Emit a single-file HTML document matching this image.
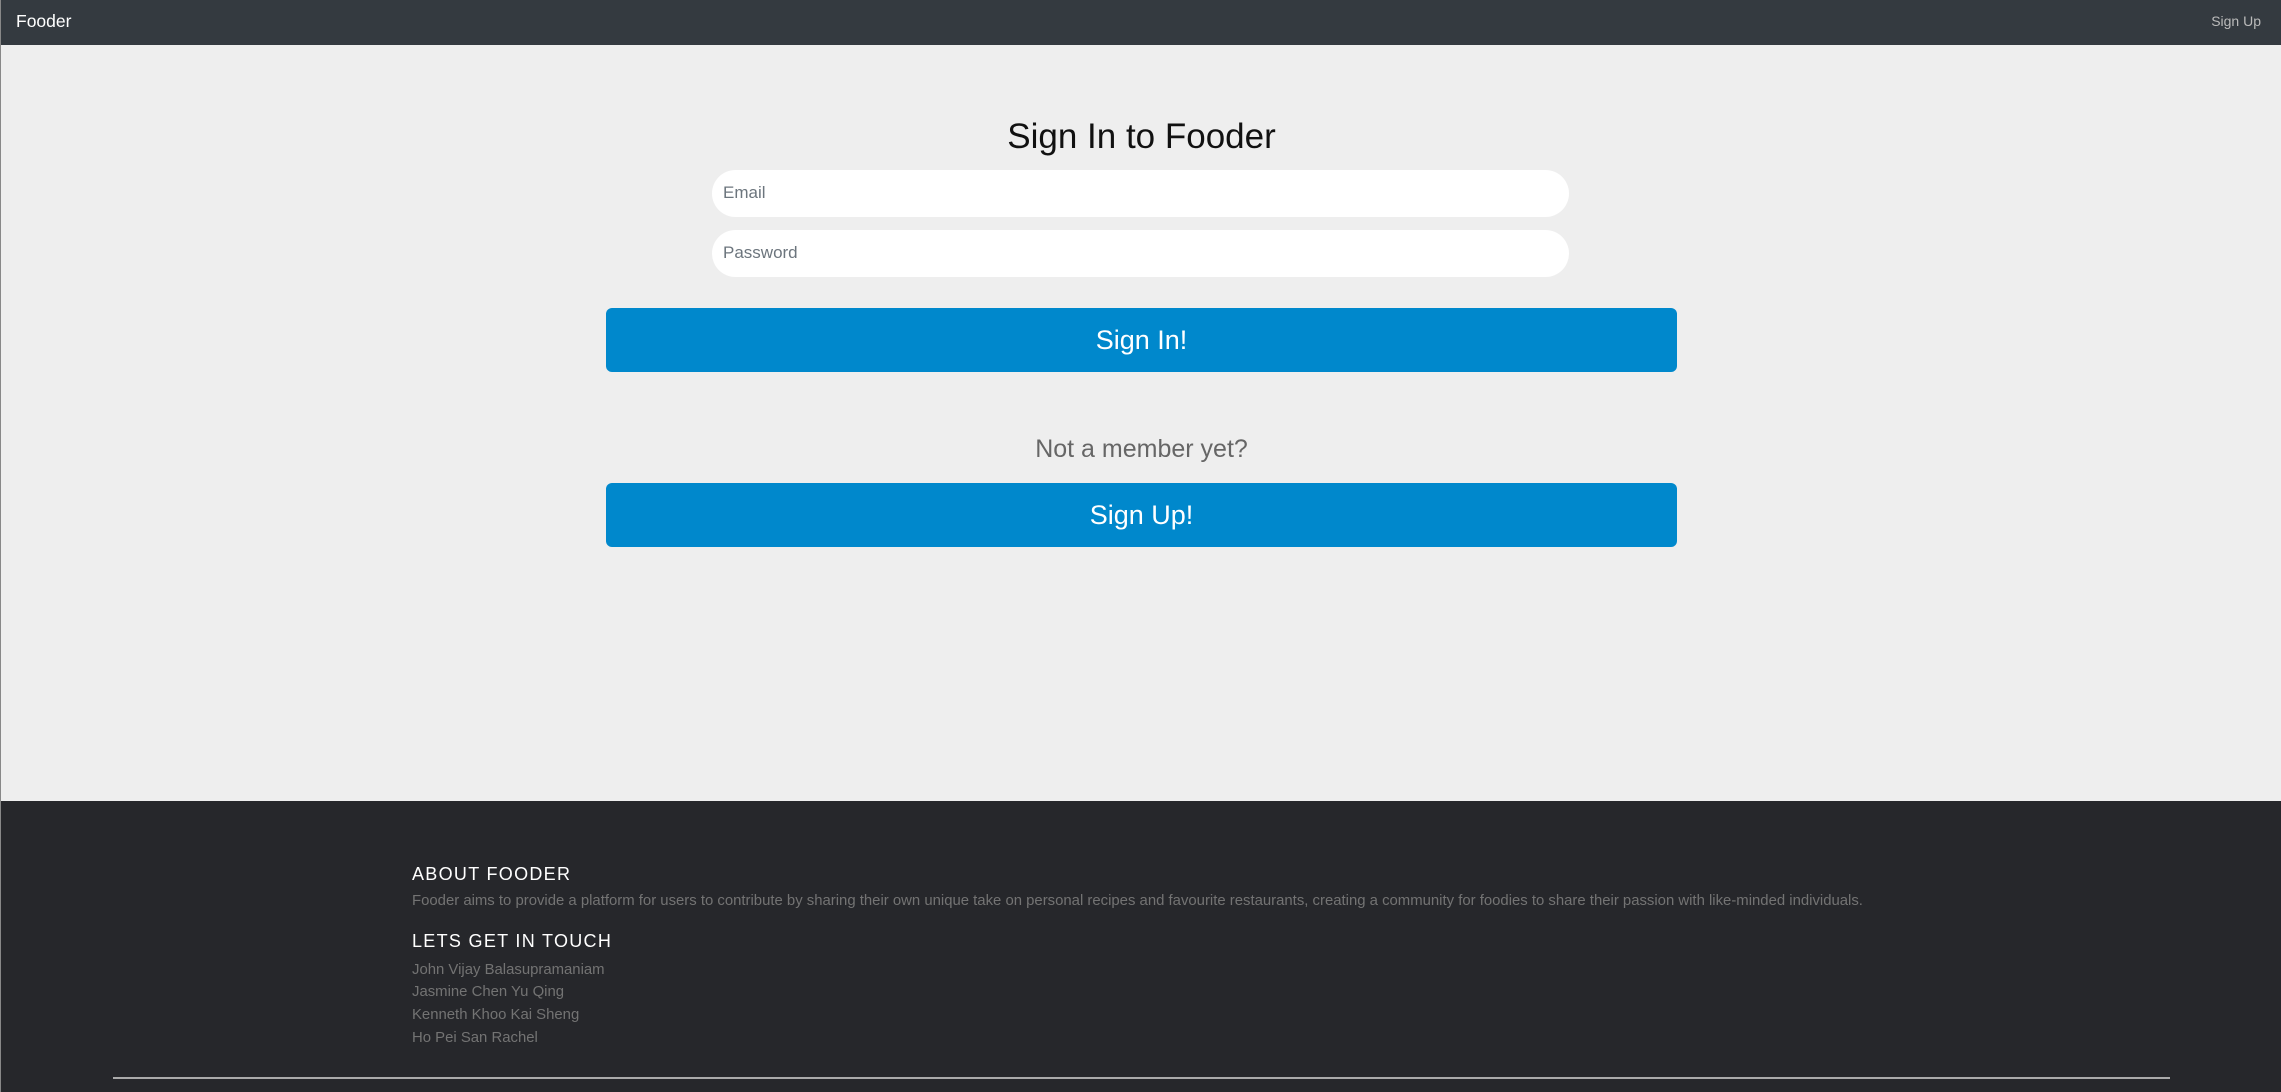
<!DOCTYPE html>
<html><head><meta charset="utf-8"><style>
*{margin:0;padding:0;box-sizing:border-box}
body{width:2281px;height:1092px;overflow:hidden;background:#eeeeee;font-family:"Liberation Sans",Arial,sans-serif;position:relative;border-left:1px solid #888}
.nav{position:absolute;left:0;top:0;width:2281px;height:45px;background:#343a40}
.brand{position:absolute;left:15px;top:11px;font-size:17.5px;color:#fff}
.navr{position:absolute;right:21px;top:13px;font-size:14px;color:#bbb}
.t{position:absolute;left:0;width:2281px;text-align:center}
.inp{position:absolute;left:711px;width:857px;height:47px;background:#fff;border-radius:24px;font-size:17px;color:#6c757d;padding:13px 0 0 11px}
.btn{position:absolute;left:605px;width:1071px;height:64px;background:#0088cc;border-radius:6px;color:#fff;font-size:27px;text-align:center;line-height:64px}
.foot{position:absolute;left:0;top:801px;width:2281px;height:291px;background:#26272b}
.h{position:absolute;left:411px;color:#fff;font-size:18px;letter-spacing:1.3px}
.p{position:absolute;left:411px;color:#737373;font-size:14.9px}
.hr{position:absolute;left:112px;top:1077px;width:2057px;height:2px;background:#aaa}
</style></head><body>
<div class="nav"><div class="brand">Fooder</div><div class="navr">Sign Up</div></div>
<div class="t" style="top:117px;font-size:35px;color:#111">Sign In to Fooder</div>
<div class="inp" style="top:170px">Email</div>
<div class="inp" style="top:230px">Password</div>
<div class="btn" style="top:308px">Sign In!</div>
<div class="t" style="top:435px;font-size:25px;color:#666">Not a member yet?</div>
<div class="btn" style="top:483px">Sign Up!</div>
<div class="foot"></div>
<div class="h" style="top:864px">ABOUT FOODER</div>
<div class="p" style="top:893px">Fooder aims to provide a platform for users to contribute by sharing their own unique take on personal recipes and favourite restaurants, creating a community for foodies to share their passion with like-minded individuals.</div>
<div class="h" style="top:931px">LETS GET IN TOUCH</div>
<div class="p" style="top:962px">John Vijay Balasupramaniam</div>
<div class="p" style="top:984px">Jasmine Chen Yu Qing</div>
<div class="p" style="top:1007px">Kenneth Khoo Kai Sheng</div>
<div class="p" style="top:1030px">Ho Pei San Rachel</div>
<div class="hr"></div>
</body></html>
